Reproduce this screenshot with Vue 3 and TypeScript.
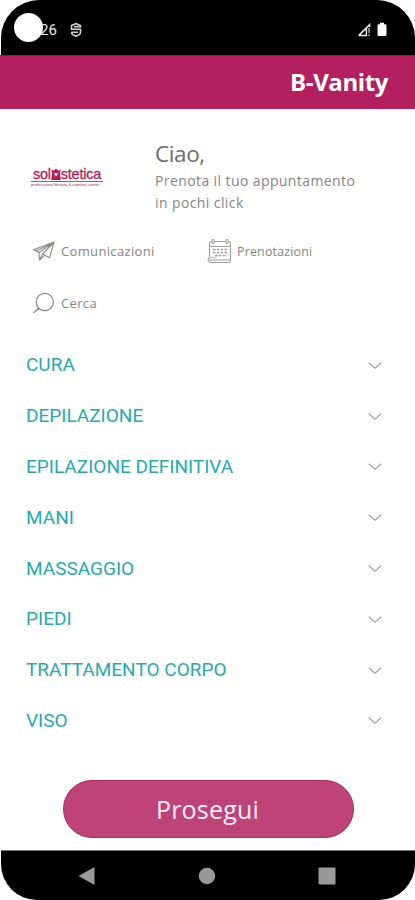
<script setup lang="ts">
const services: string[] = [
  'CURA',
  'DEPILAZIONE',
  'EPILAZIONE DEFINITIVA',
  'MANI',
  'MASSAGGIO',
  'PIEDI',
  'TRATTAMENTO CORPO',
  'VISO',
]
</script>

<template>
  <div class="screen">
    <header class="status">
      <span class="camera"></span>
      <span class="time">26</span>
      <svg class="shield" width="12" height="16" viewBox="0 0 12 16" fill="none" stroke="#d0d0d0" stroke-width="1.6">
        <path d="M10.5 5.600V3.600L6 1.700 1.500 3.600v3.700h9v3c0 1.900-2.300 3.200-4.500 3.900-2.200-.7-4.500-2-4.500-3.900" />
        <path d="M4 4.800h6.500M1.500 10.200H8" />
      </svg>
      <svg class="signal" width="14" height="14" viewBox="0 0 14 14">
        <path d="M1.600 12.600 12.600 1.600V4M1.600 12.600H9.400V4.800" fill="none" stroke="#e8e8e8" stroke-width="1.500" />
        <path d="M12 5v5M12 11.300v1.700" stroke="#aaa" stroke-width="1.500" />
      </svg>
      <svg class="battery" width="10" height="15" viewBox="0 0 10 15">
        <path d="M3 0.700h4v1.500h1.200q1.300 0 1.300 1.300v9.200q0 1.300-1.300 1.300H1.800q-1.300 0-1.300-1.300V3.500q0-1.300 1.300-1.300H3z" fill="#fff" />
      </svg>
    </header>

    <div class="appbar"><h1>B-Vanity</h1></div>

    <main>
      <section class="intro">
        <div class="logo">
          <div class="logo-name">
            <span>sol</span>
            <svg width="10" height="13" viewBox="0 0 10 13">
              <path d="M.3 1.500 2.800 2.800 5 .5l2.200 2.300 2.500-1.300-.7 3.800L9.800 12H.2L1 5.300z" fill="#b51c59" />
              <path d="M2.800 5.200h4.400L5 8.600z" fill="#fff" />
            </svg>
            <span>stetica</span>
          </div>
          <div class="logo-line"></div>
          <div class="logo-sub">professional beauty &amp; comfort center</div>
        </div>
        <div class="greeting">
          <h2>Ciao,</h2>
          <p>Prenota il tuo appuntamento<br />in pochi click</p>
        </div>
      </section>

      <nav class="actions">
        <a class="action">
          <svg width="24" height="22" viewBox="0 0 24 22" fill="none" stroke="#8a8a8a" stroke-width="1.100" stroke-linejoin="round">
            <path d="M22 2 1.500 9.800l5.500 2.700L22 2 10.500 14l7 3.800z" />
            <path d="M7 12.500 7.500 20l3-6M7.500 20l5-4.600M4.500 10.800 17 4.500" />
          </svg>
          <span>Comunicazioni</span>
        </a>
        <a class="action booking">
          <svg width="26" height="26" viewBox="0 0 26 26" fill="none" stroke="#a0a0a0" stroke-width="1">
            <path d="M7 3.500h12M5 3.500H4Q2.500 3.500 2.500 5v13.500M21 3.500h1q1.500 0 1.500 1.500v18q0 1.500-1.500 1.500H4Q1 24.500 1 22l1.500-3.500" />
            <path d="M2.500 8.500h21M5 1.500h2v4H5zM19 1.500h2v4h-2zM2 22h21" />
            <path d="M6 11.500h14M6 14.500h14M8 17.500h12" stroke-dasharray="2.500 1.300" stroke-width="1.600" />
            <path d="m2.500 20.500 2.500-2 2 2 4-4" />
          </svg>
          <span>Prenotazioni</span>
        </a>
        <a class="action">
          <svg width="24" height="24" viewBox="0 0 24 24" fill="none" stroke="#858585" stroke-width="1.200">
            <circle cx="12.800" cy="11" r="8.600" />
            <path d="m7 17.200-5.500 4.600M5.500 17l1.500 2" />
          </svg>
          <span>Cerca</span>
        </a>
      </nav>

      <ul class="services">
        <li v-for="service in services" :key="service">
          <span>{{ service }}</span>
          <svg width="14" height="9" viewBox="0 0 14 9" fill="none" stroke="#a2a2a2" stroke-width="1.200">
            <path d="m.8 1.800 6.200 5.400 6.200-5.400" />
          </svg>
        </li>
      </ul>

      <button class="proceed" type="button">Prosegui</button>
    </main>

    <footer class="navbar">
      <svg width="18" height="20" viewBox="0 0 18 20"><path d="M.5 10 16.500 1v18z" fill="#999" /></svg>
      <svg width="18" height="18" viewBox="0 0 18 18"><circle cx="9" cy="9" r="8.200" fill="#999" /></svg>
      <svg width="18" height="18" viewBox="0 0 18 18"><rect x=".5" y=".5" width="17" height="17" rx="1" fill="#999" /></svg>
    </footer>
  </div>
</template>

<style>
body {
  background: #fff;
}
</style>

<style scoped>
.screen {
  width: 415px;
  height: 900px;
  display: flex;
  flex-direction: column;
  background: #fff;
  font-family: 'Open Sans', 'Noto Sans', sans-serif;
  overflow: hidden;
}
.status {
  box-sizing: border-box;
  height: 55px;
  flex: none;
  display: flex;
  align-items: center;
  padding: 4px 28px 0 13px;
  margin: 0 0 0 1px;
  background: #000;
  border-radius: 38px 38px 0 0;
}
.camera {
  width: 29px;
  height: 29px;
  margin-top: -5px;
  border-radius: 50%;
  background: #fff;
}
.time {
  margin: 1px 0 0 -3px;
  color: #e8e8e8;
  font: 400 15px/16px Roboto, sans-serif;
}
.shield {
  margin-left: 13px;
}
.signal {
  margin-left: auto;
}
.battery {
  margin-left: 6px;
}
.appbar {
  box-sizing: border-box;
  height: 54px;
  flex: none;
  display: flex;
  align-items: center;
  justify-content: flex-end;
  padding: 0 27px 2px 0;
  background: #b41f5f;
  border-top: 1px solid #8e1749;
}
h1 {
  margin: 0;
  color: #fff;
  font-size: 24px;
  font-weight: 700;
  line-height: 32px;
  letter-spacing: -0.400px;
}
main {
  flex: 1;
  display: flex;
  flex-direction: column;
}
.intro {
  display: flex;
  height: 116px;
  flex: none;
}
.logo {
  width: 72px;
  margin: 57px 52px 0 31px;
  color: #b51c59;
}
.logo-name {
  display: flex;
  align-items: flex-end;
  height: 15px;
  padding-left: 2px;
  font: 14.500px/14px 'Liberation Sans', sans-serif;
  letter-spacing: -0.250px;
  -webkit-text-stroke: 0.300px #b51c59;
}
.logo-line {
  height: 1px;
  background: #c44475;
}
.logo-sub {
  margin-top: 1px;
  font: 4.200px/4px 'Liberation Sans', sans-serif;
  white-space: nowrap;
}
.greeting {
  padding-top: 29px;
  color: #6c6c6c;
}
h2 {
  margin: 0;
  font-size: 22.500px;
  font-weight: 400;
  line-height: 32px;
  letter-spacing: -0.400px;
}
p {
  margin: 0;
  color: #858585;
  font-size: 14px;
  line-height: 22px;
  letter-spacing: 0.400px;
  white-space: nowrap;
}
.actions {
  display: grid;
  grid-template-columns: 175px 1fr;
  grid-auto-rows: 52px;
  padding-left: 32px;
  height: 115px;
  flex: none;
  box-sizing: border-box;
}
.action {
  display: flex;
  align-items: center;
  color: #858585;
  font-size: 13px;
  letter-spacing: 0.350px;
}
.action span {
  margin-left: 5px;
}
.booking {
  font-size: 12.500px;
  letter-spacing: 0.150px;
}
.booking span {
  margin-left: 4px;
}
.services {
  list-style: none;
  margin: 0;
  padding: 0 33px 0 26px;
}
.services li {
  display: flex;
  align-items: center;
  justify-content: space-between;
  height: 50.800px;
  color: #25aab2;
  font: 19px/24px Roboto, sans-serif;
}
.proceed {
  box-sizing: border-box;
  width: 291px;
  height: 58px;
  margin: 34px 0 0 63px;
  padding: 0 2px 0 0;
  border: 1px solid #b3265f;
  border-radius: 29px;
  background: #be4377;
  color: #ffeef6;
  font: 25px/54px 'Open Sans', sans-serif;
  letter-spacing: 0.200px;
}
.navbar {
  box-sizing: border-box;
  height: 50px;
  flex: none;
  display: flex;
  align-items: center;
  justify-content: space-between;
  padding: 0 79px 0 77px;
  margin-left: 1px;
  background: #000;
  border-top: 1px solid #777;
  border-radius: 0 0 36px 36px;
}
</style>
